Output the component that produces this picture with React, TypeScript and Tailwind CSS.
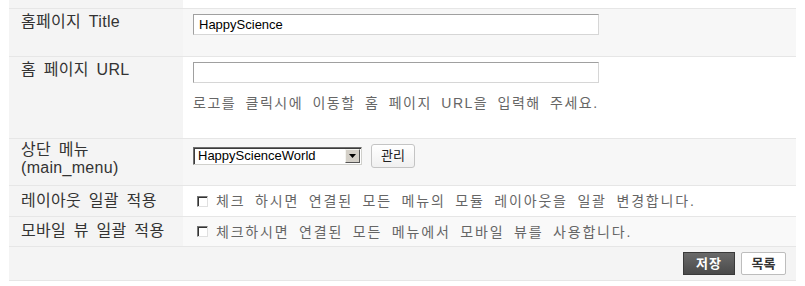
const kr = "font-['Liberation_Sans','Noto_Sans_CJK_KR',sans-serif]";

function Label({ children }: { children: React.ReactNode }) {
  return (
    <div
      className={`w-[174px] shrink-0 bg-[#f4f4f4] pl-[12px] text-[16px] leading-[18px] tracking-[0.3px] text-[#333] [word-spacing:3px] ${kr}`}
    >
      {children}
    </div>
  );
}

function TextInput({ value }: { value?: string }) {
  return (
    <div className="flex h-[21px] w-[406px] items-center border border-t-[#a0a0a0] border-l-[#a0a0a0] border-b-[#d6d6d6] border-r-[#d6d6d6] bg-white pl-[5px] font-['Liberation_Sans',sans-serif] text-[13px] text-black">
      {value}
    </div>
  );
}

function Check({ text }: { text: string }) {
  return (
    <div className="flex items-center">
      <div className="ml-[14px] h-[11px] w-[11px] border border-t-[#777] border-l-[#777] border-b-[#e0e0e0] border-r-[#e0e0e0] bg-white shadow-[inset_1px_1px_0_#333]" />
      <span className={`ml-[8px] text-[14px] leading-[18px] tracking-[1.8px] text-[#666] [word-spacing:4px] ${kr}`}>{text}</span>
    </div>
  );
}

export default function App() {
  return (
    <div className="h-[286px] w-[805px] bg-white px-[9px]">
      <div className="flex h-[9px] border-b border-[#e6e6e6]">
        <div className="w-[174px] bg-[#f4f4f4]" />
        <div className="flex-1 bg-white" />
      </div>

      <div className="flex h-[48px] border-b border-[#e6e6e6]">
        <Label>
          <div className="pt-[4px]">홈페이지 Title</div>
        </Label>
        <div className="flex-1 bg-[#f7f7f7] pl-[10px] pt-[5px]">
          <TextInput value="HappyScience" />
        </div>
      </div>

      <div className="flex h-[82px] border-b border-[#e6e6e6]">
        <Label>
          <div className="pt-[4px]">홈 페이지 URL</div>
        </Label>
        <div className="flex-1 bg-white pl-[10px] pt-[5px]">
          <TextInput />
          <div className={`mt-[11px] text-[14px] leading-[18px] tracking-[1.5px] text-[#666] [word-spacing:4px] ${kr}`}>
            로고를 클릭시에 이동할 홈 페이지 URL을 입력해 주세요.
          </div>
        </div>
      </div>

      <div className="flex h-[47px] border-b border-[#e6e6e6]">
        <Label>
          <div className="pt-[2px]">
            <div>상단 메뉴</div>
            <div>(main_menu)</div>
          </div>
        </Label>
        <div className="flex flex-1 items-start gap-[9px] bg-[#f7f7f7] pl-[10px] pt-[5px]">
          <div className="mt-[3px] flex h-[18px] w-[169px] items-center border border-t-[#6e6e6e] border-l-[#6e6e6e] border-b-[#d0d0cc] border-r-[#d0d0cc] bg-white shadow-[inset_1px_1px_0_#3c3c3c]">
            <span className="flex-1 pl-[4px] font-['Liberation_Sans',sans-serif] text-[13px] leading-[16px] text-black">
              HappyScienceWorld
            </span>
            <div className="mr-[1px] flex h-[14px] w-[15px] items-center justify-center border border-t-[#f4f4f0] border-l-[#f4f4f0] border-b-[#555] border-r-[#555] bg-[#d4d0c8]">
              <svg width="7" height="4" viewBox="0 0 7 4">
                <path d="M0 0h7L3.5 4z" fill="#000" />
              </svg>
            </div>
          </div>
          <div className={`flex h-[24px] w-[44px] items-center justify-center rounded-[3px] border border-[#c4c4c4] bg-gradient-to-b from-white to-[#f0f0f0] text-[13px] text-[#222] ${kr}`}>
            관리
          </div>
        </div>
      </div>

      <div className="flex h-[31px] border-b border-[#e6e6e6]">
        <Label>
          <div className="pt-[6px]">레이아웃 일괄 적용</div>
        </Label>
        <div className="flex flex-1 items-center bg-white">
          <Check text="체크 하시면 연결된 모든 메뉴의 모듈 레이아웃을 일괄 변경합니다." />
        </div>
      </div>

      <div className="flex h-[30px] border-b border-[#e6e6e6]">
        <Label>
          <div className="pt-[5px]">모바일 뷰 일괄 적용</div>
        </Label>
        <div className="flex flex-1 items-center bg-[#f9f9f9]">
          <Check text="체크하시면 연결된 모든 메뉴에서 모바일 뷰를 사용합니다." />
        </div>
      </div>

      <div className="flex h-[34px] items-center justify-end gap-[6px] border-b border-[#e6e6e6] bg-[#f4f4f4] pr-[10px]">
        <div className={`flex h-[23px] w-[52px] items-center justify-center border border-[#3a3a3a] bg-gradient-to-b from-[#6a6a6a] to-[#4a4a4a] text-[13px] font-bold tracking-[1px] text-white ${kr}`}>
          저장
        </div>
        <div className={`flex h-[23px] w-[45px] items-center justify-center rounded-[2px] border border-[#bdbdbd] bg-white text-[13px] font-bold text-[#333] ${kr}`}>
          목록
        </div>
      </div>
    </div>
  );
}
